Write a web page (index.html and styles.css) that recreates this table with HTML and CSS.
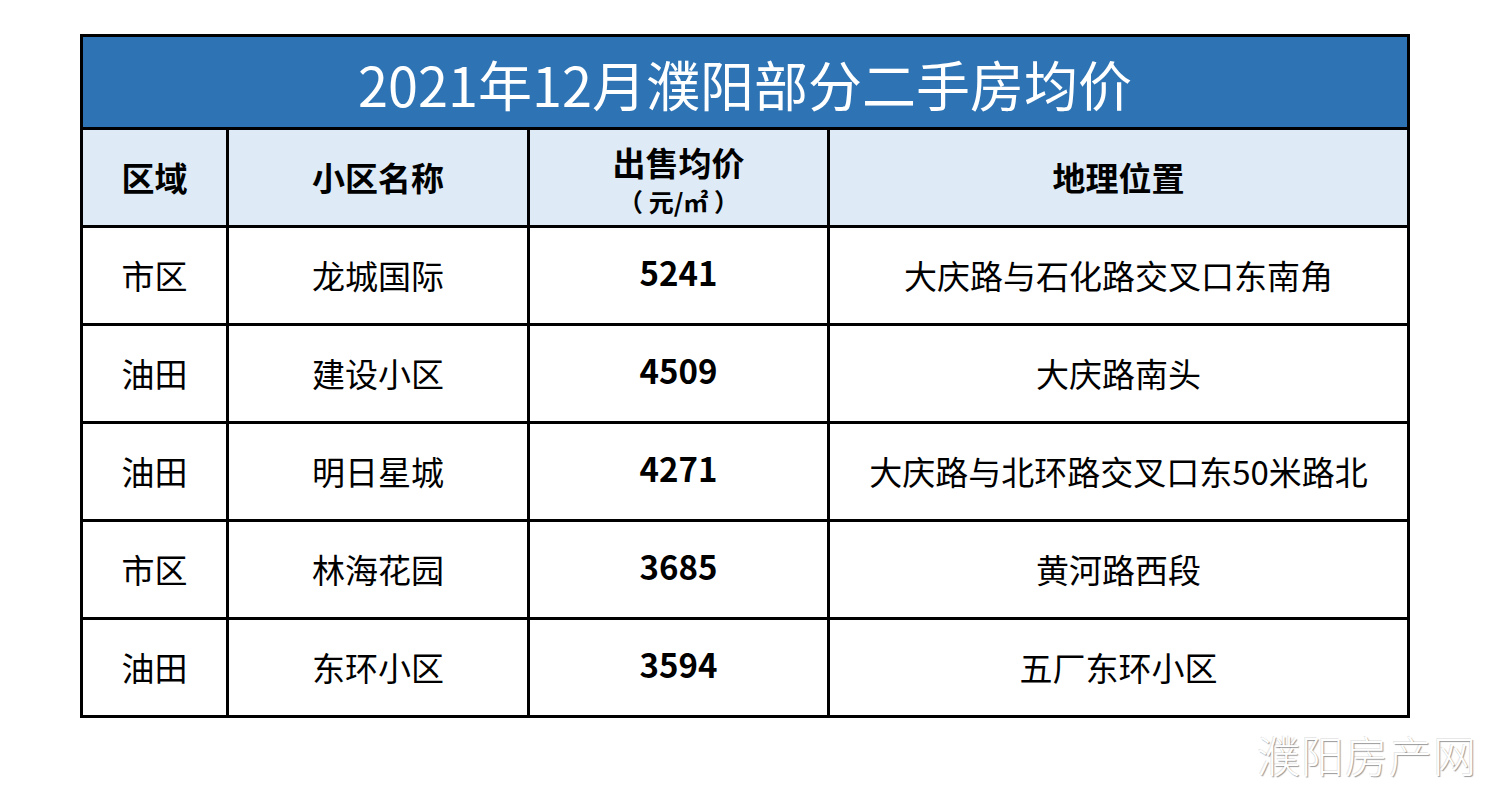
FILE: index.html
```html
<!DOCTYPE html>
<html lang="zh-CN">
<head>
<meta charset="utf-8">
<title>2021年12月濮阳部分二手房均价</title>
<link rel="stylesheet" href="styles.css">
</head>
<body>
<div class="page">
  <div class="sheet">
    <div class="title">2021年12月濮阳部分二手房均价</div>
    <div class="cell head">区域</div>
    <div class="cell head">小区名称</div>
    <div class="cell head price-head"><span>出售均价</span><span class="unit">（ 元/㎡ ）</span></div>
    <div class="cell head">地理位置</div>

    <div class="cell">市区</div>
    <div class="cell">龙城国际</div>
    <div class="cell num">5241</div>
    <div class="cell">大庆路与石化路交叉口东南角</div>

    <div class="cell">油田</div>
    <div class="cell">建设小区</div>
    <div class="cell num">4509</div>
    <div class="cell">大庆路南头</div>

    <div class="cell">油田</div>
    <div class="cell">明日星城</div>
    <div class="cell num">4271</div>
    <div class="cell">大庆路与北环路交叉口东50米路北</div>

    <div class="cell">市区</div>
    <div class="cell">林海花园</div>
    <div class="cell num">3685</div>
    <div class="cell">黄河路西段</div>

    <div class="cell">油田</div>
    <div class="cell">东环小区</div>
    <div class="cell num">3594</div>
    <div class="cell">五厂东环小区</div>
  </div>
  <div class="watermark">濮阳房产网</div>
</div>
</body>
</html>
```
FILE: styles.css
```css
html, body {
  margin: 0;
  padding: 0;
  background: #ffffff;
}
body {
  font-family: "Noto Sans CJK SC", "Noto Sans", sans-serif;
  color: #000;
}
.page {
  width: 1500px;
  height: 796px;
  padding: 34px 0 0 80px;
  box-sizing: border-box;
  overflow: hidden;
}
.sheet {
  display: grid;
  grid-template-columns: 143px 298px 297px 577px;
  grid-template-rows: 90px 95px repeat(5, 95px);
  gap: 3px;
  padding: 3px;
  background: #000;
  width: max-content;
}
.title {
  grid-column: 1 / 5;
  background: #2e74b5;
  color: #fff;
  font-size: 54px;
  font-weight: 400;
  display: flex;
  align-items: center;
  justify-content: center;
  padding-top: 2px;
}
.cell {
  background: #fff;
  display: flex;
  align-items: center;
  justify-content: center;
  font-size: 33px;
  line-height: 1;
}
.head {
  background: #deebf7;
  font-weight: 700;
  font-size: 33px;
}
.price-head {
  flex-direction: column;
  gap: 10px;
  padding-top: 4px;
}
.unit {
  font-size: 25px;
  white-space: pre;
}
.num {
  font-weight: 700;
  font-size: 33px;
  padding-bottom: 6px;
}
.watermark {
  width: 1397px;
  text-align: right;
  margin-top: 5px;
  font-size: 43px;
  font-weight: 300;
  letter-spacing: 1px;
  color: #fff;
  text-shadow: 1px 1px 1px rgba(0,0,0,0.4), -1px -1px 0 rgba(0,0,0,0.1);
}
```
